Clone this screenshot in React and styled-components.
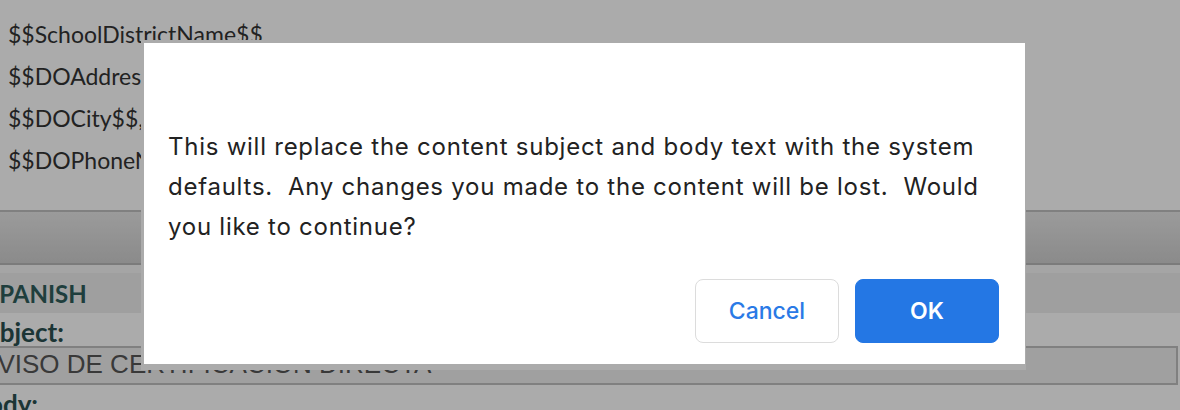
import React from "react";
import styled, { createGlobalStyle } from "styled-components";

const GlobalStyle = createGlobalStyle`
  html, body {
    margin: 0;
    padding: 0;
    background: #ffffff;
    overflow: hidden;
  }
`;

const Page = styled.div`
  position: relative;
  width: 1180px;
  height: 410px;
  overflow: hidden;
  font-family: Lato, "Open Sans", sans-serif;
  color: #333;
`;

const AddressBlock = styled.div`
  padding: 13px 8px 0;
  font-size: 23px;
  line-height: 42px;
  white-space: nowrap;
`;

const Toolbar = styled.div`
  margin-top: 29px;
  height: 51px;
  border-top: 2px solid #bfbfbf;
  border-bottom: 2px solid #b8b8b8;
  background: linear-gradient(#e7e7e7, #cfcfcf);
`;

const LangSection = styled.div`
  margin-left: -22px;
  border-top: 8px solid #f6f6f6;
`;

const LangHeader = styled.div`
  height: 40px;
  padding-left: 8px;
  background: #ededed;
  color: #2f5d5b;
  font-weight: 700;
  font-size: 24px;
  line-height: 42px;
`;

const FieldLabel = styled.div`
  height: 33px;
  margin-left: -7px;
  color: #2a5050;
  font-weight: 700;
  font-size: 26px;
  line-height: 38px;
`;

const TextBox = styled.div`
  height: 35px;
  margin-right: 2px;
  padding: 0 2px;
  border: 2px solid #bfbfbf;
  background: #efefef;
  color: #555;
  font-family: "Liberation Sans", Arial, sans-serif;
  font-size: 26px;
  line-height: 33px;
  white-space: nowrap;
  overflow: hidden;
`;

const Overlay = styled.div`
  position: fixed;
  inset: 0;
  background: rgba(0, 0, 0, 0.33);
`;

const Dialog = styled.div`
  position: absolute;
  left: 141px;
  top: 40px;
  width: 831px;
  padding: 84px 26px 21px 24px;
  background: #ffffff;
  border-style: solid;
  border-color: #ababab;
  border-width: 3px 1px 6px 3px;
  font-family: Inter, "Liberation Sans", sans-serif;
`;

const Message = styled.p`
  margin: 0;
  font-size: 24px;
  line-height: 40px;
  letter-spacing: 0.75px;
  color: #222;
  white-space: pre-wrap;
`;

const Actions = styled.div`
  display: flex;
  justify-content: flex-end;
  gap: 16px;
  margin-top: 32px;
`;

const Button = styled.button`
  width: 144px;
  height: 64px;
  border-radius: 8px;
  font-family: Inter, "Liberation Sans", sans-serif;
  font-size: 23px;
  cursor: pointer;
  border: 1px solid ${({ primary }) => (primary ? "#2477e4" : "#dcdcdc")};
  background: ${({ primary }) => (primary ? "#2477e4" : "#ffffff")};
  color: ${({ primary }) => (primary ? "#ffffff" : "#2a7ae6")};
  font-weight: ${({ primary }) => (primary ? 600 : 500)};
`;

export default function App() {
  return (
    <>
      <GlobalStyle />
      <Page>
        <AddressBlock>
          <div>$$SchoolDistrictName$$</div>
          <div>$$DOAddress1$$</div>
          <div>$$DOCity$$, $$DOState$$ $$DOZip$$</div>
          <div>$$DOPhoneNumber$$</div>
        </AddressBlock>
        <Toolbar />
        <LangSection>
          <LangHeader>SPANISH</LangHeader>
          <FieldLabel>Subject:</FieldLabel>
          <TextBox>AVISO DE CERTIFICACION DIRECTA</TextBox>
          <FieldLabel>Body:</FieldLabel>
        </LangSection>
        <Overlay>
          <Dialog role="dialog">
            <Message>
              {"This will replace the content subject and body text with the system defaults.  Any changes you made to the content will be lost.  Would you like to continue?"}
            </Message>
            <Actions>
              <Button>Cancel</Button>
              <Button primary>OK</Button>
            </Actions>
          </Dialog>
        </Overlay>
      </Page>
    </>
  );
}
